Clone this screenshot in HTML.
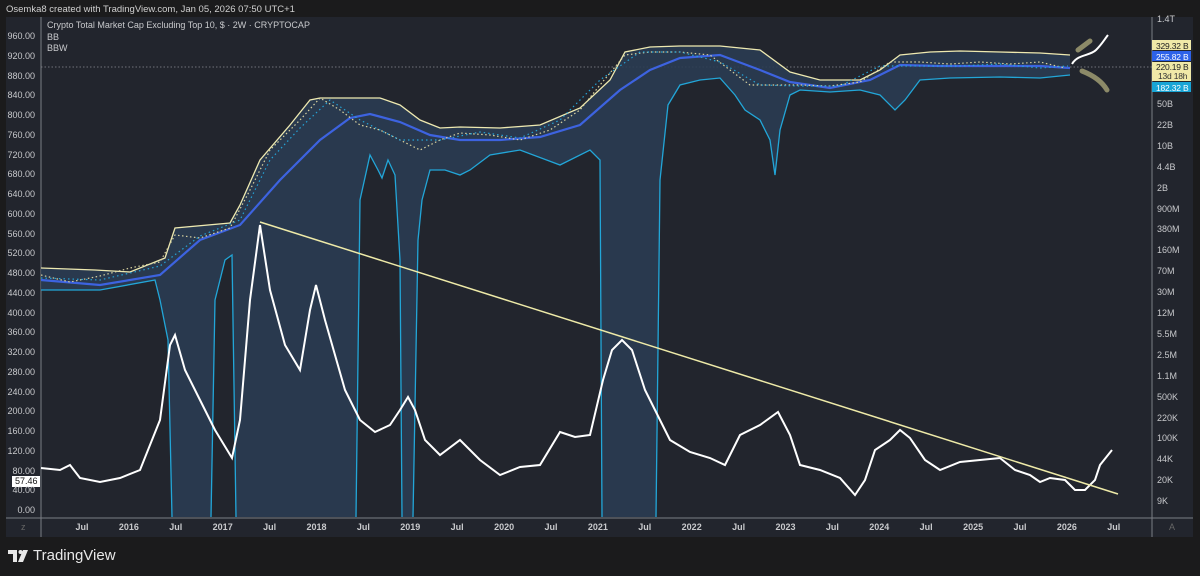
<!DOCTYPE html>
<html><head><style>
body{margin:0;width:1200px;height:576px;background:#1b1b1c;font-family:"Liberation Sans",sans-serif;overflow:hidden;position:relative}
.t{position:absolute;font-size:9px;color:#c8c9cc}
.p{font-size:8.5px;letter-spacing:-0.2px}
</style></head><body>
<div class="t" style="left:6px;top:4px;font-size:9.5px;color:#d0d0d0">Osemka8 created with TradingView.com, Jan 05, 2026 07:50 UTC+1</div>
<svg width="1200" height="576" style="position:absolute;left:0;top:0">
<rect x="6" y="17" width="1187" height="520" fill="#22252d"/>
<line x1="41" y1="17" x2="41" y2="537" stroke="#7b7e85" stroke-width="1"/>
<line x1="1152" y1="17" x2="1152" y2="537" stroke="#7b7e85" stroke-width="1"/>
<line x1="6" y1="518" x2="1193" y2="518" stroke="#7b7e85" stroke-width="1"/>
<line x1="41" y1="67" x2="1152" y2="67" stroke="#8a8d94" stroke-dasharray="1.5,2" stroke-width="0.8"/>
<polygon fill="#2a3c52" fill-opacity="0.9" points="41,268 95,270 130,272 165,258 175,228 230,223 240,205 260,160 290,125 310,100 320,98 380,98 400,105 420,120 440,128 460,127 500,128 540,125 580,108 610,80 625,52 650,47 680,46 720,46 760,50 790,72 820,80 860,80 880,70 900,55 930,52 960,51 1000,52 1040,53 1070,55 1070,75 1040,78 1000,77 950,78 920,80 905,100 895,110 880,95 860,90 830,92 800,90 790,95 780,130 775,175 770,140 760,120 745,110 735,95 720,78 700,80 680,85 668,105 660,180 656,517 602,517 600,160 590,150 560,165 520,150 490,155 470,170 460,175 445,170 430,170 422,200 418,240 413,517 402,517 400,260 395,175 388,160 382,178 378,170 370,155 360,200 356,517 236,517 232,255 225,260 215,300 211,517 172,517 168,340 160,300 155,280 100,290 41,290"/>
<path fill="none" stroke="#22a6d8" stroke-width="1.3" d="M41,290 L100,290 155,280 160,300 168,340 172,517 M211,517 L215,300 225,260 232,255 236,517 M356,517 L360,200 370,155 378,170 382,178 388,160 395,175 400,260 402,517 M413,517 L418,240 422,200 430,170 445,170 460,175 470,170 490,155 520,150 560,165 590,150 600,160 602,517 M656,517 L660,180 668,105 680,85 700,80 720,78 735,95 745,110 760,120 770,140 775,175 780,130 790,95 800,90 830,92 860,90 880,95 895,110 905,100 920,80 950,78 1000,77 1040,78 1070,75"/>
<polyline fill="none" stroke="#eee9b0" stroke-width="1.3" points="41,268 95,270 130,272 165,258 175,228 230,223 240,205 260,160 290,125 310,100 320,98 380,98 400,105 420,120 440,128 460,127 500,128 540,125 580,108 610,80 625,52 650,47 680,46 720,46 760,50 790,72 820,80 860,80 880,70 900,55 930,52 960,51 1000,52 1040,53 1070,55"/>
<polyline fill="none" stroke="#3d63e0" stroke-width="2.2" points="41,280 100,285 160,275 200,240 240,225 280,180 320,140 350,118 370,114 400,122 430,135 460,140 500,140 540,137 580,125 620,90 650,70 680,58 720,55 760,70 790,82 830,88 870,80 900,65 940,66 1000,66 1040,66 1070,68"/>
<polyline fill="none" stroke="#d9d3a0" stroke-width="1.2" stroke-dasharray="1.5,2.5" points="41,275 70,282 100,276 130,268 160,262 175,235 200,238 230,228 250,190 270,150 300,120 320,98 340,110 360,125 380,130 400,140 420,150 440,140 460,133 490,135 520,140 550,130 580,110 600,85 625,55 650,52 680,52 710,55 730,70 750,85 770,85 800,85 830,86 860,82 890,62 920,62 950,64 980,62 1010,64 1040,62 1065,68"/>
<polyline fill="none" stroke="#25a3d6" stroke-width="1.2" stroke-dasharray="1.5,3" points="41,278 100,280 160,266 200,236 240,220 270,160 300,128 330,100 360,120 400,140 440,140 480,132 520,138 560,120 600,80 640,52 680,52 720,62 760,85 800,86 840,86 880,66 920,66 960,66 1000,64 1040,68 1068,66"/>
<polyline fill="none" stroke="#ffffff" stroke-width="2" points="41,468 60,470 70,465 80,478 100,482 120,478 140,470 160,420 170,345 175,335 185,370 200,400 215,430 232,458 240,420 250,300 260,225 270,290 285,345 300,370 310,310 316,285 325,320 345,390 360,420 375,432 390,425 400,410 408,397 415,410 425,440 440,455 460,440 480,460 500,475 520,467 540,465 560,432 575,437 590,435 603,380 612,350 622,340 632,350 645,390 660,420 670,440 690,452 710,458 725,465 740,435 760,425 778,412 790,435 800,465 820,470 840,478 855,495 865,480 875,450 890,440 900,430 910,438 925,460 940,470 960,462 980,460 1000,458 1015,470 1030,475 1040,482 1050,478 1065,480 1075,490 1085,490 1095,480 1100,465 1112,450"/>
<line x1="260" y1="222" x2="1118" y2="494" stroke="#eeeaa8" stroke-width="1.5"/>
<path d="M1072,64 C1078,54 1090,56 1096,50 S1104,40 1108,35" fill="none" stroke="#fff" stroke-width="2"/>
<path d="M1078,50 L1090,41" stroke="#8c8a68" stroke-width="5" stroke-linecap="round" fill="none"/>
<path d="M1082,71 Q1100,78 1107,90" stroke="#8c8a68" stroke-width="5" stroke-linecap="round" fill="none"/>
<rect x="1152" y="40" width="39" height="10" fill="#f0e9a8"/>
<rect x="1152" y="51" width="39" height="10" fill="#2d62e8"/>
<rect x="1152" y="62" width="39" height="19" fill="#f0e9a8"/>
<rect x="1152" y="82" width="39" height="10" fill="#19a5d6"/>
<rect x="12" y="476" width="28" height="11" fill="#fff"/>
<path d="M8,550 h9 v12 h-4 v-8 h-5z M16,550" fill="#e8e8e8"/>
<circle cx="20.5" cy="552" r="2" fill="#e8e8e8"/>
<path d="M23,550 h5 l-5,12 h-5z" fill="#e8e8e8"/>
</svg>
<div class="t p" style="left:1156px;top:41px;color:#222">329.32 B</div>
<div class="t p" style="left:1156px;top:52px;color:#fff">255.82 B</div>
<div class="t p" style="left:1156px;top:62px;color:#222">220.19 B</div>
<div class="t p" style="left:1158px;top:71px;color:#333">13d 18h</div>
<div class="t p" style="left:1156px;top:83px;color:#fff">182.32 B</div>
<div class="t" style="left:15px;top:476px;color:#111">57.46</div>
<div class="t" style="left:47px;top:20px">Crypto Total Market Cap Excluding Top 10, $ · 2W · CRYPTOCAP</div>
<div class="t" style="left:47px;top:32px">BB</div>
<div class="t" style="left:47px;top:43px">BBW</div>
<div id="la"></div><div id="ra"></div><div id="ba"></div>
<div style="position:absolute;left:33px;top:547px;color:#e8e8e8;font-size:15px">TradingView</div>
<script>
var h='';var v=[960,920,880,840,800,760,720,680,640,600,560,520,480,440,400,360,320,280,240,200,160,120,80,40,0];
v.forEach(function(n,i){h+='<div class="t" style="right:1165px;top:'+(31+i*19.75)+'px">'+n.toFixed(2)+'</div>'});
document.getElementById('la').innerHTML=h;
h='';var r=['50B','22B','10B','4.4B','2B','900M','380M','160M','70M','30M','12M','5.5M','2.5M','1.1M','500K','220K','100K','44K','20K','9K'];
r.forEach(function(n,i){h+='<div class="t" style="left:1157px;top:'+(99+i*20.9)+'px">'+n+'</div>'});
h+='<div class="t" style="left:1157px;top:14px">1.4T</div>';
document.getElementById('ra').innerHTML=h;
h='';var b=['Jul','2016','Jul','2017','Jul','2018','Jul','2019','Jul','2020','Jul','2021','Jul','2022','Jul','2023','Jul','2024','Jul','2025','Jul','2026','Jul'];
b.forEach(function(n,i){var x=82+i*46.9;h+='<div class="t" style="left:'+(x-12)+'px;width:24px;text-align:center;top:522px;font-weight:bold">'+n+'</div>'});
h+='<div class="t" style="left:21px;top:522px;color:#666">z</div><div class="t" style="left:1169px;top:522px;color:#666">A</div>';
document.getElementById('ba').innerHTML=h;
</script>
</body></html>
